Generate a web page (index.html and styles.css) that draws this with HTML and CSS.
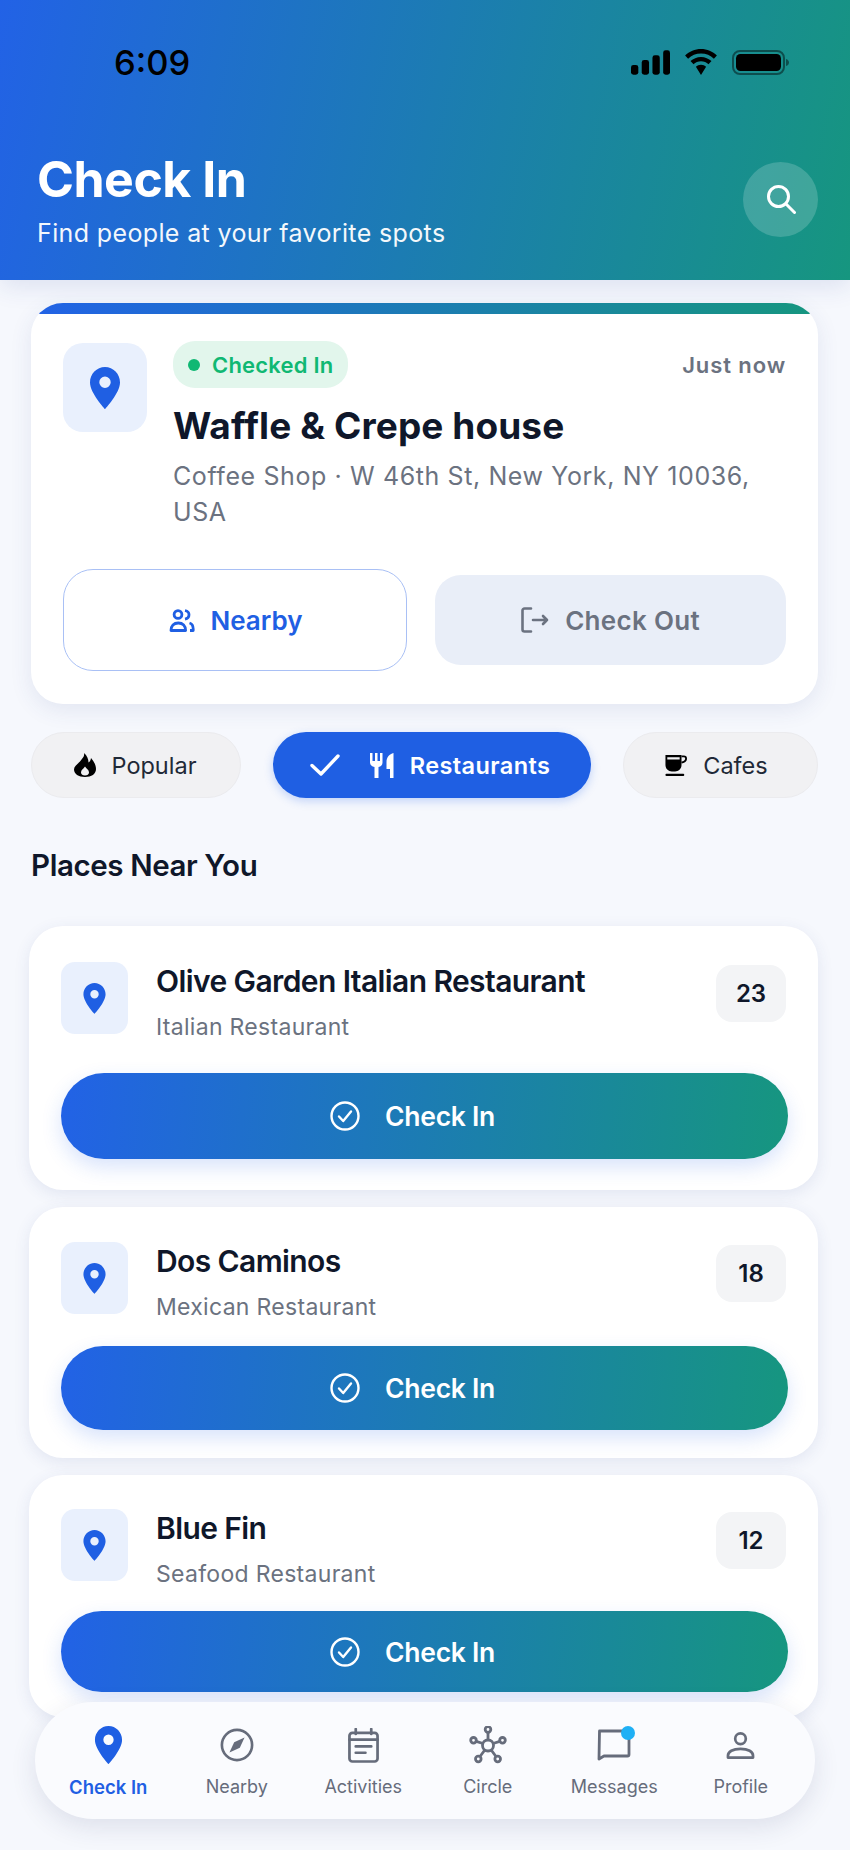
FILE: index.html
```html
<!DOCTYPE html>
<html>
<head>
    <title>Check In</title>
    <link rel="stylesheet" href="styles.css">
</head>
<body>
    <svg class="sprite" width="0" height="0">
        <defs>
            <symbol id="pin" viewBox="0 0 30 42">
                <path fill-rule="evenodd" d="M15 0C6.7 0 0 6.9 0 15.4 0 26 15 42 15 42s15-16 15-26.6C30 6.9 23.3 0 15 0zm0 9.5a5.7 5.7 0 1 1 0 11.4 5.7 5.7 0 0 1 0-11.4z"/>
            </symbol>
            <symbol id="check-circle" viewBox="0 0 30 30">
                <circle cx="15" cy="15" r="13.5" fill="none" stroke="currentColor" stroke-width="2.4"/>
                <path d="M9 15.5l4.2 4.5L21 10.5" fill="none" stroke="currentColor" stroke-width="2.4" stroke-linecap="round" stroke-linejoin="round"/>
            </symbol>
        </defs>
    </svg>

    <header class="top">
        <div class="status">
            <span class="time">6:09</span>
            <div class="status-icons">
                <svg class="ic-signal" viewBox="0 0 40 25"><rect x="0" y="15" width="7.5" height="10" rx="2.5"/><rect x="11" y="10" width="7.5" height="15" rx="2.5"/><rect x="22" y="5" width="7.5" height="20" rx="2.5"/><rect x="33" y="0" width="7" height="25" rx="2.5"/></svg>
                <svg class="ic-wifi" viewBox="0 0 36 26"><path d="M18 4.6c5 0 9.5 1.900 12.900 5.100l3-3.200C29.700 2.500 24.100 0 18 0S6.300 2.500 2.100 6.500l3 3.200C8.500 6.500 13 4.600 18 4.600zM18 12.300c2.900 0 5.500 1.100 7.500 3l3-3.200c-2.800-2.600-6.400-4.200-10.500-4.200S10.300 9.500 7.500 12.100l3 3.200c2-1.900 4.600-3 7.500-3zM18 15.800c-2 0-3.800.8-5.100 2L18 26l5.100-8.200c-1.300-1.200-3.100-2-5.100-2z"/></svg>
                <svg class="ic-battery" viewBox="0 0 57 25"><rect x="1" y="1" width="51" height="23" rx="7" fill="none" stroke="#000" stroke-opacity="0.45" stroke-width="2"/><rect x="4" y="4" width="45" height="17" rx="4.5"/><path d="M54 9c2 .6 3 2 3 3.500s-1 3-3 3.500z" fill-opacity="0.45"/></svg>
            </div>
        </div>
        <div class="top-row">
            <div>
                <h1>Check In</h1>
                <p class="tagline">Find people at your favorite spots</p>
            </div>
            <button class="search-btn">
                <svg viewBox="0 0 30 30" fill="none" stroke="#fff" stroke-width="3" stroke-linecap="round"><circle cx="12.5" cy="12.5" r="10"/><path d="M19.8 19.8L28.500 28.500"/></svg>
            </button>
        </div>
    </header>

    <main class="content">
        <section class="current">
            <div class="current-info">
                <div class="pin-tile pin-tile-big"><svg class="pin-big"><use href="#pin"/></svg></div>
                <div class="current-text">
                    <div class="current-meta">
                        <span class="badge"><i class="badge-dot"></i>Checked In</span>
                        <span class="when">Just now</span>
                    </div>
                    <h2>Waffle &amp; Crepe house</h2>
                    <p class="address">Coffee Shop · W 46th St, New York, NY 10036, USA</p>
                </div>
            </div>
            <div class="current-actions">
                <button class="btn-nearby">
                    <svg viewBox="0 0 25 23" fill="none" stroke="currentColor" stroke-width="2.8" stroke-linejoin="round"><circle cx="8.500" cy="5.500" r="3.900"/><path d="M1.500 21.500c0-4.500 2.800-7.500 7.300-7.500s7.300 3 7.300 7.500z"/><path d="M15.500 1.500c2.500.5 4 2.200 4 4.300s-1.500 3.800-4 4.300M20 14c2.500.8 3.700 3 3.700 6v1.500h-3.200"/></svg>
                    Nearby
                </button>
                <button class="btn-checkout">
                    <svg viewBox="0 0 28 26" fill="none" stroke="currentColor" stroke-width="2.6" stroke-linecap="round" stroke-linejoin="round"><path d="M10 1.500H3.500a2 2 0 0 0-2 2v19a2 2 0 0 0 2 2H10"/><path d="M12 13h14M22 9l4 4-4 4"/></svg>
                    Check Out
                </button>
            </div>
        </section>

        <div class="chips">
            <button class="chip chip-popular">
                <svg viewBox="0 0 22 24"><path fill-rule="evenodd" d="M10 0c.8 3.500-1.500 5.500-4 8.500C3 11.500 0 13.500 0 16.500 0 21 4.500 24 11 24s11-3 11-8c0-4-2-7.500-5-11-.3 2-1 3.500-2.500 4.500C14.500 6 13 2.500 10 0zM11 13.500c-1.800 2.500-4 3.500-4 6 0 2 1.800 3 4 3s4-1 4-3c0-2.500-2.200-3.500-4-6z"/></svg>
                Popular
            </button>
            <button class="chip chip-active chip-restaurants">
                <svg class="chip-check" viewBox="0 0 30 22" fill="none" stroke="#fff" stroke-width="3.4" stroke-linecap="round" stroke-linejoin="round"><path d="M2 11.500L11 20 28 2"/></svg>
                <svg class="chip-fork" viewBox="0 0 24 25" fill="#fff"><path d="M0 0h2.500v8H5V0h2.500v8H10V0h2.500v9.500c0 2.500-1.500 4-4 4.500v11h-4V14C2 13.500 0 12 0 9.500zM23.500 0v25H20v-9h-3.500V9c0-5 3-8 7-9z"/></svg>
                Restaurants
            </button>
            <button class="chip chip-cafes">
                <svg viewBox="0 0 24 24"><path fill-rule="evenodd" d="M.5 1H18v11c0 4.500-3.500 7-7 7H7.500C3.500 19 .5 16 .5 12zM2.500 3.500v2.500H16V3.500z"/><path d="M18 2.500h2.500c1.500 0 2.500 1 2.500 2.500s-1 3-2.500 3.500L18 9.500" fill="none" stroke="#000" stroke-width="2"/><rect x=".5" y="21.500" width="20.500" height="2.500" rx="1"/></svg>
                Cafes
            </button>
        </div>

        <h3 class="section-title">Places Near You</h3>

        <div class="places">
            <article class="place place-one">
                <div class="place-row">
                    <div class="pin-tile"><svg class="pin-small"><use href="#pin"/></svg></div>
                    <div class="place-text">
                        <h4>Olive Garden Italian Restaurant</h4>
                        <p>Italian Restaurant</p>
                    </div>
                    <span class="count">23</span>
                </div>
                <button class="btn-checkin"><svg><use href="#check-circle"/></svg>Check In</button>
            </article>
            <article class="place place-two">
                <div class="place-row">
                    <div class="pin-tile"><svg class="pin-small"><use href="#pin"/></svg></div>
                    <div class="place-text">
                        <h4>Dos Caminos</h4>
                        <p>Mexican Restaurant</p>
                    </div>
                    <span class="count">18</span>
                </div>
                <button class="btn-checkin"><svg><use href="#check-circle"/></svg>Check In</button>
            </article>
            <article class="place place-three">
                <div class="place-row">
                    <div class="pin-tile"><svg class="pin-small"><use href="#pin"/></svg></div>
                    <div class="place-text">
                        <h4>Blue Fin</h4>
                        <p>Seafood Restaurant</p>
                    </div>
                    <span class="count">12</span>
                </div>
                <button class="btn-checkin"><svg><use href="#check-circle"/></svg>Check In</button>
            </article>
        </div>
    </main>

    <nav class="tabbar">
        <a class="tab tab-active">
            <div class="tab-icon"><svg class="i-pin"><use href="#pin"/></svg></div>
            <span>Check In</span>
        </a>
        <a class="tab tab-nudge">
            <div class="tab-icon">
                <svg class="i-compass" viewBox="0 0 36 36"><circle cx="18" cy="18" r="16" fill="none" stroke="currentColor" stroke-width="2.8"/><path d="M26 10l-5 11-11 5 5-11z" fill="currentColor"/></svg>
            </div>
            <span>Nearby</span>
        </a>
        <a class="tab tab-nudge">
            <div class="tab-icon">
                <svg class="i-cal" viewBox="0 0 32 36" fill="none" stroke="currentColor" stroke-width="2.8" stroke-linecap="round"><rect x="1.500" y="5" width="29" height="29.500" rx="3"/><path d="M8 1v5M24 1v5M1.500 12h29M8 19h16M8 25.500h10"/></svg>
            </div>
            <span>Activities</span>
        </a>
        <a class="tab">
            <div class="tab-icon">
                <svg class="i-circle" viewBox="0 0 38 38" fill="none" stroke="currentColor" stroke-width="2.8"><circle cx="19" cy="19.500" r="5.500"/><circle cx="19" cy="3.500" r="2.800"/><circle cx="4.500" cy="14.300" r="2.800"/><circle cx="33.500" cy="14.300" r="2.800"/><circle cx="9.300" cy="33" r="2.800"/><circle cx="28.700" cy="33" r="2.800"/><path d="M19 6.500v7.500M7.200 15.300l6.800 2.200M30.800 15.300L24 17.500M11 30.500l4.800-6.500M27 30.500L22.200 24"/></svg>
            </div>
            <span>Circle</span>
        </a>
        <a class="tab">
            <div class="tab-icon tab-icon-msg">
                <svg class="i-msg" viewBox="0 0 34 32" fill="none" stroke="currentColor" stroke-width="2.800" stroke-linejoin="round"><path d="M2.500 2h28a1.500 1.500 0 0 1 1.500 1.500v22a1.500 1.500 0 0 1-1.500 1.500H7l-5 3z"/></svg>
                <i class="tab-dot"></i>
            </div>
            <span>Messages</span>
        </a>
        <a class="tab">
            <div class="tab-icon">
                <svg class="i-user" viewBox="0 0 30 28" fill="none" stroke="currentColor" stroke-width="2.8" stroke-linejoin="round"><circle cx="15" cy="7" r="5.500"/><path d="M2 26.500v-2c0-4 5-7 13-7s13 3 13 7v2z"/></svg>
            </div>
            <span>Profile</span>
        </a>
    </nav>
</body>
</html>
```

FILE: styles.css
```css
* {
    box-sizing: border-box;
}
body {
    position: relative;
    margin: 0;
    width: 850px;
    height: 1850px;
    overflow: hidden;
    font-family: Inter, "Liberation Sans", sans-serif;
    background-color: #f6f8fd;
    color: #0f172a;
}
h1, h2, h3, h4, p {
    margin: 0;
}
button {
    font-family: inherit;
    border: none;
    display: flex;
    align-items: center;
    justify-content: center;
    padding: 0;
}
.sprite {
    position: absolute;
}

/* header */
.top {
    height: 280px;
    padding: 37px 32px 0 37px;
    background: linear-gradient(102deg, #2262e6 0%, #16967f 100%);
    color: white;
    box-shadow: 0 6px 24px rgba(37, 60, 150, 0.12);
}
.status {
    display: flex;
    justify-content: space-between;
    align-items: center;
    height: 50px;
}
.time {
    margin-left: 77px;
    font-size: 34.5px;
    font-weight: 500;
    color: #000;
}
.status-icons {
    display: flex;
    align-items: center;
    gap: 13px;
    margin-right: 29px;
}
.ic-signal { width: 39px; height: 25px; }
.ic-wifi { width: 36px; height: 26px; }
.ic-battery { width: 57px; height: 25px; }
.top-row {
    display: flex;
    justify-content: space-between;
    align-items: center;
    padding-top: 62px;
}
h1 {
    font-size: 50px;
    font-weight: 700;
    line-height: 60px;
    letter-spacing: -0.5px;
}
.tagline {
    font-size: 25px;
    line-height: 32px;
    margin-top: 8px;
    letter-spacing: 0.37px;
    opacity: 0.95;
}
.search-btn {
    width: 75px;
    height: 75px;
    border-radius: 50%;
    background: rgba(255, 255, 255, 0.18);
}
.search-btn svg {
    width: 30px;
    height: 30px;
}

/* main */
.content {
    padding: 23px 32px 0 31px;
}
.current {
    height: 401px;
    padding: 38px 32px 0 32px;
    background: white;
    border-radius: 32px;
    overflow: hidden;
    position: relative;
    box-shadow: 0 6px 22px rgba(50, 70, 140, 0.1);
}
.current:before {
    content: "";
    position: absolute;
    top: 0;
    left: 0;
    right: 0;
    height: 11px;
    background: linear-gradient(90deg, #2262e6, #16967f);
}
.current-info {
    display: flex;
    gap: 26px;
}
.pin-tile {
    flex: none;
    display: flex;
    align-items: center;
    justify-content: center;
    width: 67px;
    height: 72px;
    border-radius: 14px;
    background: #e9f0fd;
}
.pin-tile-big {
    width: 84px;
    height: 89px;
    border-radius: 20px;
    margin-top: 2px;
}
.pin-big {
    width: 30px;
    height: 42px;
    fill: #1f5fe3;
}
.pin-small {
    width: 23px;
    height: 31px;
    fill: #1f5fe3;
}
.current-text {
    flex: 1;
}
.current-meta {
    display: flex;
    justify-content: space-between;
    align-items: center;
}
.badge {
    display: flex;
    align-items: center;
    gap: 12px;
    height: 47px;
    padding: 0 15px;
    border-radius: 22px;
    background: #e2f6ec;
    color: #10b873;
    font-size: 22px;
    font-weight: 600;
    letter-spacing: 0.2px;
}
.badge-dot {
    width: 12px;
    height: 12px;
    border-radius: 50%;
    background: #10b873;
}
.when {
    font-size: 22px;
    font-weight: 600;
    color: #6b7280;
    letter-spacing: 0.9px;
}
.current h2 {
    font-size: 37px;
    font-weight: 700;
    line-height: 46px;
    margin-top: 15px;
    letter-spacing: 0.1px;
}
.address {
    font-size: 25px;
    line-height: 36px;
    margin-top: 9px;
    color: #6b7280;
    letter-spacing: 0.6px;
}
.current-actions {
    display: flex;
    align-items: center;
    gap: 28px;
    margin-top: 39px;
}
.btn-nearby {
    width: 344px;
    height: 102px;
    gap: 13px;
    background: white;
    border: 1.5px solid #a9c0f5;
    border-radius: 30px;
    color: #1f5fe3;
    font-size: 26px;
    font-weight: 600;
}
.btn-nearby svg {
    width: 30px;
    height: 23px;
}
.btn-checkout {
    width: 351px;
    height: 90px;
    gap: 16px;
    background: #e9eef8;
    border-radius: 26px;
    color: #6b7280;
    font-size: 26px;
    font-weight: 600;
    letter-spacing: 0.3px;
}
.btn-checkout svg {
    width: 28px;
    height: 26px;
}

/* filter chips */
.chips {
    display: flex;
    justify-content: space-between;
    margin-top: 28px;
}
.chip {
    height: 66px;
    border-radius: 33px;
    background: #f1f1f3;
    border: 1px solid #ebebee;
    font-size: 23.5px;
    color: #1f2937;
    gap: 16px;
}
.chip svg {
    flex: none;
    width: 22px;
    height: 24px;
}
.chip-popular {
    width: 210px;
    padding-right: 2px;
}
.chip-restaurants {
    width: 318px;
    padding-right: 4px;
    letter-spacing: 0.4px;
}
.chip-cafes {
    width: 195px;
    padding-right: 8px;
}
.chip-active {
    background: #1f5fe3;
    border: none;
    color: white;
    font-weight: 600;
    box-shadow: 0 3px 10px rgba(37, 99, 235, 0.25);
}
.chip svg.chip-check {
    width: 30px;
    height: 22px;
    margin-right: 14px;
}
.chip svg.chip-fork {
    width: 24px;
    height: 25px;
}
.section-title {
    font-size: 29.5px;
    font-weight: 600;
    line-height: 35px;
    margin-top: 50px;
    letter-spacing: -0.4px;
}

/* places */
.places {
    display: flex;
    flex-direction: column;
    gap: 17px;
    margin: 43px 0 0 -2px;
}
.place {
    padding: 36px 30px 31px 32px;
    background: white;
    border-radius: 34px;
    box-shadow: 0 4px 16px rgba(50, 70, 140, 0.1);
}
.place-two { padding: 35px 30px 28px 32px; }
.place-three { padding: 34px 30px 25px 32px; }
.place-row {
    display: flex;
    height: 111px;
}
.place-two .place-row { height: 104px; }
.place-three .place-row { height: 102px; }
.place-text {
    flex: 1;
    margin-left: 28px;
}
.place-text h4 {
    font-size: 30px;
    font-weight: 600;
    line-height: 36px;
    margin-top: 1px;
    letter-spacing: -0.6px;
}
.place-text p {
    font-size: 23px;
    line-height: 30px;
    margin-top: 13px;
    color: #6b7280;
    letter-spacing: 0.3px;
}
.count {
    display: flex;
    align-items: center;
    justify-content: center;
    width: 70px;
    height: 57px;
    margin: 3px 2px 0 0;
    border-radius: 16px;
    background: #f3f4f6;
    font-size: 24px;
    font-weight: 600;
}
.btn-checkin {
    width: 727px;
    height: 86px;
    padding-right: 24px;
    gap: 25px;
    border-radius: 43px;
    background: linear-gradient(95deg, #2262e6 0%, #16967f 100%);
    color: white;
    font-size: 26.5px;
    font-weight: 600;
    letter-spacing: -0.3px;
    box-shadow: 0 8px 20px rgba(37, 99, 235, 0.18);
}
.place-two .btn-checkin { height: 84px; }
.place-three .btn-checkin { height: 81px; }
.btn-checkin svg {
    width: 30px;
    height: 30px;
}

/* bottom nav */
.tabbar {
    position: absolute;
    left: 35px;
    bottom: 31px;
    display: flex;
    width: 780px;
    height: 117px;
    padding: 24px 10px 0;
    background: #fafbfe;
    border-radius: 58px;
    box-shadow: 0 8px 26px rgba(40, 50, 100, 0.12);
}
.tab {
    flex: none;
    width: 126.5px;
    display: flex;
    flex-direction: column;
    align-items: center;
    color: #666c7b;
    font-size: 18px;
}
.tab-nudge {
    padding-left: 4px;
}
.tab-icon {
    position: relative;
    display: flex;
    align-items: center;
    justify-content: center;
    height: 38px;
}
.i-pin { width: 29px; height: 38px; fill: #1f5fe3; }
.i-compass { width: 34px; height: 34px; }
.i-cal { width: 31px; height: 35px; }
.i-circle { width: 38px; height: 38px; }
.i-msg { width: 34px; height: 32px; }
.i-user { width: 29px; height: 27px; }
.tab span {
    margin-top: 10px;
    line-height: 26px;
}
.tab-active {
    color: #1f5fe3;
    font-size: 18.5px;
    font-weight: 600;
}
.tab-dot {
    position: absolute;
    top: 0;
    right: -4px;
    width: 14px;
    height: 14px;
    border-radius: 50%;
    background: #1fb0f5;
}
```
